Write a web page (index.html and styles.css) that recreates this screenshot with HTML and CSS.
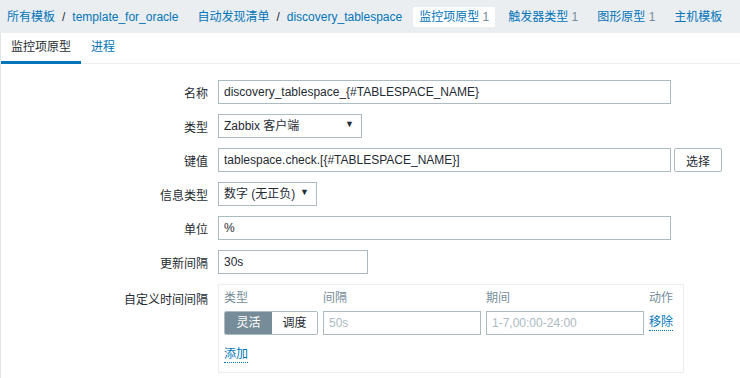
FILE: index.html
```html
<!DOCTYPE html>
<html lang="zh">
<head>
  <meta charset="UTF-8">
  <title>监控项原型</title>
  <link rel="stylesheet" href="styles.css">
</head>
<body>

  <ul class="crumbs">
    <li><a href="#">所有模板</a><span class="sep">/</span><a href="#">template_for_oracle</a></li>
    <li><a href="#">自动发现清单</a><span class="sep">/</span><a href="#">discovery_tablespace</a></li>
    <li class="current"><a href="#">监控项原型</a> <sup>1</sup></li>
    <li><a href="#">触发器类型</a> <sup>1</sup></li>
    <li><a href="#">图形原型</a> <sup>1</sup></li>
    <li><a href="#">主机模板</a></li>
  </ul>

  <div class="panel">
    <ul class="tabs">
      <li class="active">监控项原型</li>
      <li><a href="#">进程</a></li>
    </ul>

    <form class="form">
      <div class="row">
        <label>名称</label>
        <input type="text" class="wide" value="discovery_tablespace_{#TABLESPACE_NAME}">
      </div>

      <div class="row">
        <label>类型</label>
        <div class="select type-select">
          <select><option>Zabbix 客户端</option></select>
          <span class="arrow">▼</span>
        </div>
      </div>

      <div class="row">
        <label>键值</label>
        <input type="text" class="wide" value="tablespace.check.[{#TABLESPACE_NAME}]">
        <button type="button" class="btn">选择</button>
      </div>

      <div class="row">
        <label>信息类型</label>
        <div class="select info-select">
          <select><option>数字 (无正负)</option></select>
          <span class="arrow">▼</span>
        </div>
      </div>

      <div class="row">
        <label>单位</label>
        <input type="text" class="wide" value="%">
      </div>

      <div class="row">
        <label>更新间隔</label>
        <input type="text" class="short" value="30s">
      </div>

      <div class="row">
        <label class="top">自定义时间间隔</label>
        <div class="intervals">
          <div class="grid">
            <span class="th">类型</span>
            <span class="th">间隔</span>
            <span class="th">期间</span>
            <span class="th right">动作</span>

            <div class="seg">
              <span class="on">灵活</span>
              <span>调度</span>
            </div>
            <input type="text" placeholder="50s">
            <input type="text" placeholder="1-7,00:00-24:00">
            <a href="#" class="dotted">移除</a>
          </div>
          <a href="#" class="dotted add">添加</a>
        </div>
      </div>
    </form>
  </div>

</body>
</html>
```

FILE: styles.css
```css
body {
  margin: 0;
  font-family: "Liberation Sans", Arial, "Noto Sans CJK SC", sans-serif;
  font-size: 12px;
  color: #1f2c33;
  background: #fff;
}

a {
  color: #0275b8;
  text-decoration: none;
}

/* top breadcrumb bar */
.crumbs {
  display: flex;
  align-items: center;
  height: 33px;
  margin: 0;
  padding: 0 0 0 2px;
  list-style: none;
  background: #ebeef0;
  white-space: nowrap;
}

.crumbs li {
  padding: 3px 5px;
  margin-right: 9px;
  line-height: 14px;
}

.crumbs .sep {
  color: #1f2c33;
  margin: 0 7px;
}

.crumbs sup {
  vertical-align: baseline;
  font-size: 12px;
  color: #768d99;
}

.crumbs .current {
  background: #fff;
  border-radius: 2px;
  padding: 3px 6px;
  margin-left: -3px;
  margin-right: 8px;
}

/* content */
.panel {
  border-left: 1px solid #dfe4e7;
  height: 345px;
}

.tabs {
  display: flex;
  height: 30px;
  margin: 0;
  padding: 0;
  list-style: none;
  border-bottom: 1px solid #ebeef0;
}

.tabs li {
  padding: 0 10px;
  line-height: 29px;
  border-bottom: 3px solid transparent;
  margin-bottom: -1px;
}

.tabs li.active {
  border-bottom-color: #0275b8;
}

.form {
  padding-top: 16px;
}

.row {
  display: flex;
  align-items: center;
  margin-bottom: 10px;
}

.row label {
  width: 207px;
  padding-right: 10px;
  text-align: right;
  flex-shrink: 0;
}

.row label.top {
  align-self: flex-start;
  padding-top: 6px;
}

input, select, .btn {
  font-family: inherit;
  font-size: 12px;
  color: #1f2c33;
  box-sizing: border-box;
  height: 24px;
  border: 1px solid #acbbc2;
  background: #fff;
  padding: 0 5px;
  margin: 0;
  border-radius: 0;
  outline: none;
}

input::placeholder {
  color: #acbbc2;
}

input.wide {
  width: 453px;
}

input.short {
  width: 150px;
}

.btn {
  width: 48px;
  margin-left: 3px;
  border-radius: 2px;
  padding: 0;
}

.select {
  position: relative;
}

.select select {
  appearance: none;
  -webkit-appearance: none;
  width: 100%;
  padding-right: 20px;
}

.type-select {
  width: 144px;
}

.info-select {
  width: 99px;
}

.select .arrow {
  position: absolute;
  right: 8px;
  top: 5px;
  font-size: 9px;
  color: #1f2c33;
  pointer-events: none;
}

/* custom intervals */
.intervals {
  box-sizing: border-box;
  width: 466px;
  height: 89px;
  border: 1px solid #ebeef0;
  padding: 5px 10px 0 5px;
}

.grid {
  display: grid;
  grid-template-columns: 94px 158px 158px 1fr;
  column-gap: 5px;
  row-gap: 5px;
  align-items: center;
}

.th {
  color: #768d99;
  line-height: 16px;
}

.right {
  text-align: right;
}

.grid input {
  width: 100%;
}

.seg {
  display: flex;
  height: 24px;
  border: 1px solid #acbbc2;
  border-radius: 2px;
  box-sizing: border-box;
  overflow: hidden;
}

.seg span {
  flex: 1;
  text-align: center;
  line-height: 22px;
}

.seg .on {
  flex: 0 0 47px;
  background: #768d99;
  color: #fff;
}

.dotted {
  justify-self: end;
  border-bottom: 1px dotted #0275b8;
  line-height: 15px;
}

.add {
  display: inline-block;
  margin-top: 12px;
}
```
